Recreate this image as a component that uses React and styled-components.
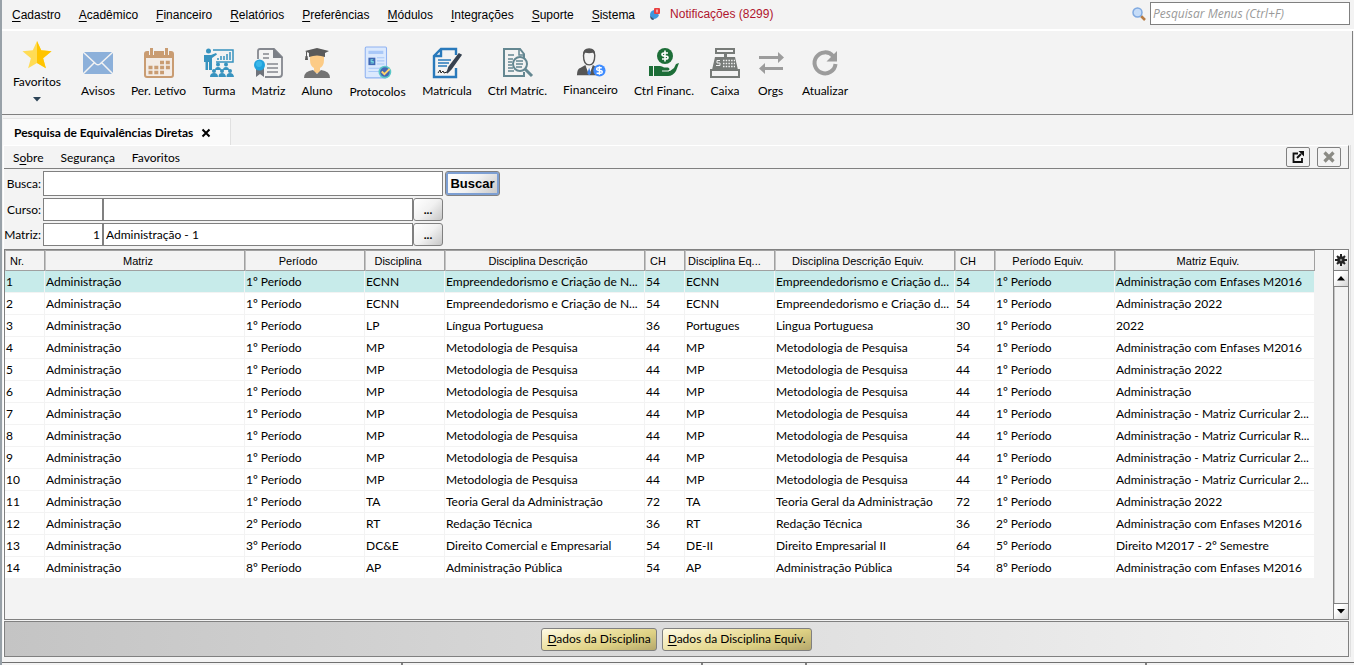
import React from "react";
import styled, { createGlobalStyle, css } from "styled-components";

const ui = `Lato, "Open Sans", sans-serif`;
const arial = `"Liberation Sans", Arial, sans-serif`;
const line = "#808080";

const Global = createGlobalStyle`
  * { box-sizing: border-box; }
  html, body, #root { height: 100%; }
  body { margin: 0; background: #f3f3f3; color: #000; font: 12px/16px ${ui}; }
  button, input { font: inherit; color: inherit; margin: 0; }
  button { padding: 0; }
`;

const Window = styled.div`
  display: flex;
  flex-direction: column;
  min-height: 100%;
  border-left: 2px solid #98a1a8;
  overflow: hidden;
`;

const MenuBar = styled.header`
  display: flex;
  align-items: center;
  height: 31px;
  padding: 0 4px 2px 10px;
  border-bottom: 2px solid #fff;
  font-family: ${arial};
`;

const MenuNav = styled.nav`
  display: flex;
  gap: ${(p) => p.$gap}px;
  flex: 1;
`;

const MenuButton = styled.button`
  padding-top: 2px;
  border: 0;
  background: none;
  white-space: nowrap;
  u { text-underline-offset: 2px; }
`;

const Notice = styled(MenuButton)`
  display: flex;
  align-items: center;
  gap: 8px;
  margin-left: -4px;
  padding-top: 0;
  color: #b0152e;
`;

const Search = styled.label`
  display: flex;
  align-items: center;
  gap: 4px;
  input {
    width: 200px;
    height: 23px;
    padding: 0 2px;
    border: 1px solid ${line};
    background: #fff;
    font-family: "Open Sans", sans-serif;
    font-style: italic;
    border-radius: 0;
  }
  input::placeholder { color: #999; opacity: 1; }
`;

const ToolBar = styled.div`
  display: flex;
  align-items: center;
  height: 84px;
  padding-left: 3px;
  margin-right: 1px;
  border-right: 1px solid ${line};
  border-bottom: 1px solid ${line};
`;

const Tool = styled.button`
  display: flex;
  flex-direction: column;
  align-items: center;
  gap: 4px;
  width: ${(p) => p.$width}px;
  margin-right: ${(p) => (p.$spaced ? 4 : 0)}px;
  border: 0;
  background: none;
  white-space: nowrap;
  svg { display: block; }
`;

const TabStrip = styled.div`
  display: flex;
  padding: 3px 0 0 1px;
  height: 30px;
`;

const Tab = styled.div`
  display: flex;
  align-items: center;
  gap: 8px;
  width: 228px;
  padding: 2px 0 0 11px;
  border-top: 1px solid #e6e6e6;
  border-right: 1px solid #e0e0e0;
  background: #fafafa;
  font-weight: 700;
  white-space: nowrap;
  button { display: flex; border: 0; background: none; }
`;

const Panel = styled.main`
  display: flex;
  flex-direction: column;
  flex: 1;
  margin: 0 3px 0 1px;
  padding-right: 1px;
  border-left: 1px solid #fff;
  border-right: 1px solid #e0e0e0;
`;

const PanelMenu = styled.div`
  display: flex;
  align-items: center;
  height: 24px;
  padding: 0 7px 0 9px;
  border-top: 1px solid #fff;
  border-right: 1px solid ${line};
  border-bottom: 1px solid ${line};
`;

const IconButton = styled.button`
  display: flex;
  align-items: center;
  justify-content: center;
  width: 24px;
  height: 20px;
  margin-left: 7px;
  border: 1px solid ${line};
  border-radius: 2px;
  background: #f3f3f3;
`;

const Form = styled.form`
  display: flex;
  flex-direction: column;
  gap: 2px;
  padding: 2px 0 3px;
`;

const Field = styled.div`
  display: flex;
  align-items: center;
  height: ${(p) => p.$height || 23}px;
  label { width: 39px; padding-right: 2px; text-align: right; white-space: nowrap; }
`;

const TextBox = styled.input`
  width: ${(p) => p.$width}px;
  height: 100%;
  padding: 0 2px;
  border: 1px solid ${line};
  border-radius: 0;
  background: #fff;
  text-align: ${(p) => p.$align || "left"};
`;

const raised = css`
  border: 1px solid ${line};
  border-radius: 3px;
  background: linear-gradient(135deg, #fff 0%, #f1f1f1 50%, #c6c6c6 100%);
`;

const PickButton = styled.button`
  ${raised}
  width: 30px;
  height: 100%;
  font-weight: 700;
`;

const SearchButton = styled.button`
  ${raised}
  width: 55px;
  height: 100%;
  margin-left: 2px;
  box-shadow: inset 0 0 0 2px #7d9fd3;
  font: 700 13px/16px ${arial};
`;

const GridFrame = styled.section`
  display: flex;
  flex: 1;
  border: 1px solid ${line};
`;

const GridBody = styled.div`
  flex: 1;
  overflow: hidden;
`;

const Table = styled.table`
  width: 1310px;
  table-layout: fixed;
  border-collapse: separate;
  border-spacing: 0;
  th, td { overflow: hidden; white-space: nowrap; }
  th {
    height: 21px;
    padding: 1px 16px 0 2px;
    border: 1px solid #a0a0a0;
    border-left-color: #c4c4c4;
    font: 400 11px/16px ${arial};
    text-align: center;
  }
  th.start { text-align: left; padding: 1px 0 0 4px; }
  th.tight { text-align: left; padding: 1px 0 0 2px; }
  td {
    height: 22px;
    padding: 0 0 0 1px;
    border-right: 1px solid #f3f3f3;
    border-bottom: 1px solid #f3f3f3;
    line-height: 16px;
  }
`;

const Row = styled.tr`
  td { background: ${(p) => (p.$selected ? "#c7ebea" : "#fff")}; }
`;

const ScrollBar = styled.div`
  display: flex;
  flex-direction: column;
  width: 15px;
  border-left: 1px solid ${line};
`;

const ScrollButton = styled.button`
  display: flex;
  align-items: center;
  justify-content: center;
  height: ${(p) => p.$height}px;
  border: 0;
  border-bottom: 1px solid ${line};
  background: linear-gradient(135deg, #fff 30%, #d4d4d4);
  &:last-child { border-top: 1px solid ${line}; border-bottom: 0; }
`;

const Track = styled.div`
  flex: 1;
  border-left: 1px solid #c4c4c4;
`;

const Actions = styled.footer`
  display: flex;
  align-items: center;
  justify-content: center;
  gap: 5px;
  height: 36px;
  margin-top: 1px;
  border: 1px solid ${line};
  background: linear-gradient(90deg, #c4c4c4, #f3f3f3);
`;

const ActionButton = styled.button`
  height: 23px;
  padding: 0 5px;
  border: 1px solid ${line};
  border-radius: 3px;
  background: linear-gradient(165deg, #fffbe6 0%, #ece0a0 40%, #ded184 65%, #b5a86c 100%);
  white-space: nowrap;
  u { text-underline-offset: 2px; }
`;

const StatusBar = styled.div`
  display: flex;
  height: 3px;
  margin-top: 5px;
  border-top: 1px solid #707070;
`;

const StatusCell = styled.div`
  flex: ${(p) => p.$share} 1 0;
  border-right: 2px solid ${line};
  &:last-child { border-right: 0; }
`;

const I = ({ size = 32, children }) => (
  <svg width={size} height={size} viewBox="0 0 32 32" aria-hidden="true">{children}</svg>
);

const icons = {
  star: (
    <I size={30}>
      <path d="M16 1l4.500 10L31.500 12l-9 7.500 3 10.500L16 24.500 6.500 30l3-10.500-9-7.500 11-1z" fill="#ffdc55" />
      <path d="M16 1l4.500 10L31.500 12l-9 7.500 3 10.500L16 24.500z" fill="#ffc400" />
    </I>
  ),
  mail: (
    <I>
      <path d="M1 5h30v22H1z" fill="#8cb0da" />
      <path d="M1 5l13 12q2 1.500 4 0L31 5M1 27l11-11M31 27L20 16" fill="none" stroke="#f3f3f3" strokeWidth="1.500" />
    </I>
  ),
  calendar: (
    <I>
      <rect x="2" y="5" width="28" height="25" rx="2" fill="#f3ece6" stroke="#c99c72" strokeWidth="2" />
      <path d="M2 5h28v6H2z" fill="#c99c72" />
      <path d="M8.500 1v7M23.500 1v7" stroke="#f3f3f3" strokeWidth="5" />
      <path d="M8.500 1v7M23.500 1v7" stroke="#c99c72" strokeWidth="3" />
      <path d="M17 15.500h10M5.500 20.500h21.500M5.500 25.500h15.500" stroke="#c99c72" strokeWidth="3.500" strokeDasharray="4 1.800" />
    </I>
  ),
  classroom: (
    <I>
      <path d="M10 3h20v12H13" fill="#f3f3f3" stroke="#3793bf" strokeWidth="1.500" />
      <path d="M15 13v-2M18 13V9M21 13v-4M24 13V7M27 13V5" stroke="#3793bf" strokeWidth="1.500" />
      <g fill="#3793bf">
        <circle cx="5.500" cy="4" r="2.500" />
        <path d="M1 8h7l5-2 1 1.500L9 11v12H6v-8H5v8H2.500v-8H1z" />
        <circle cx="15" cy="17.500" r="2" /><circle cx="23" cy="17.500" r="2" />
        <circle cx="11" cy="24" r="2" /><circle cx="19" cy="24" r="2" /><circle cx="27" cy="24" r="2" />
        <path d="M12 23q0-3 3-3t3 3zM20 23q0-3 3-3t3 3zM7 30q0-4 4-4t4 4zM15.500 30q0-4 3.500-4t4 4zM23.500 30q0-4 3.500-4t4 4z" />
      </g>
    </I>
  ),
  certificate: (
    <I>
      <path d="M5 12V4q0-2 2-2h14l8 8v17q0 3-3 3H12" fill="none" stroke="#85888f" strokeWidth="1.800" />
      <path d="M20 1l10 10H20z" fill="#7c8087" />
      <path d="M10 7h6M10 11h6M14 17h11M14 21h11M14 25h11" stroke="#85888f" strokeWidth="1.500" />
      <path d="M3 21h8v9l-4-3-4 3z" fill="#6f737b" />
      <circle cx="6.500" cy="18" r="5.500" fill="#22a3dd" />
      <circle cx="6" cy="17" r="3" fill="#3bb8ea" />
    </I>
  ),
  graduate: (
    <I>
      <path d="M9 7h14v6q0 6-4 8v5h-6v-5q-4-2-4-8z" fill="#fccb86" />
      <path d="M4 4l12-3 12 3-4 2v4q-8-3-16 0V6z" fill="#595959" />
      <path d="M5.500 4.500V12" stroke="#595959" /><path d="M4.500 9h2l.5 4H4z" fill="#595959" />
      <path d="M3 31q0-7 9-8l4 4 4-4q9 1 9 8z" fill="#737373" />
    </I>
  ),
  protocol: (
    <I size={34}>
      <rect x="4" y="1" width="20" height="29" rx="1" fill="#dbe9fd" stroke="#8fb2f1" />
      <path d="M7 6h14" stroke="#a9c8f8" strokeWidth="3" />
      <path d="M15 11h7M15 14h7M15 17h7M7 21h14M7 24h10" stroke="#a9c8f8" />
      <rect x="7" y="11" width="6.500" height="7" fill="#4068b3" />
      <path d="M11.500 13H9.500v1.500h2V16h-2.500" fill="none" stroke="#76d8df" />
      <circle cx="22.500" cy="24.500" r="6" fill="#5ac8c8" />
      <circle cx="22.500" cy="24.500" r="4.500" fill="#4467b4" />
      <path d="M19.500 24l2.500 2.500 5-5" fill="none" stroke="#ffd36a" strokeWidth="1.800" />
    </I>
  ),
  enrol: (
    <I>
      <path d="M25 8V2H10L3 9v21h22v-9M10 2v7H3" fill="none" stroke="#2979bb" strokeWidth="2.400" />
      <path d="M7 13h13M7 16h11M7 19h9" stroke="#2979bb" strokeWidth="1.500" />
      <path d="M7 26l2-3 1 3 2-2 1 2 3-1" fill="none" stroke="#222" />
      <path d="M16 26l2-6L28 7l2 1-10 14z" fill="#374250" stroke="#374250" strokeWidth="1.500" />
    </I>
  ),
  inspect: (
    <I>
      <path d="M22 12V7l-4-5H2v27h20v-4" fill="none" stroke="#648791" strokeWidth="2" />
      <path d="M17 2v6h5M6 8h6M6 12h5M6 15h4M6 18h4M6 21h5M6 24h6" fill="none" stroke="#648791" strokeWidth="1.500" />
      <circle cx="18" cy="17" r="7" fill="#f3f3f3" stroke="#648791" strokeWidth="2" />
      <path d="M14 14h7M14 17h7M14 20h6" stroke="#648791" strokeWidth="1.500" />
      <path d="M23 22l7 7" stroke="#648791" strokeWidth="3" />
    </I>
  ),
  finance: (
    <I size={30}>
      <path d="M8 8q0-7 6-7t6 7q0 10-6 10T8 8z" fill="#f3f3f3" stroke="#555" strokeWidth="1.500" />
      <path d="M8 9Q6 1 14 1t6 8q-1-4-2-4-4 1-8 0-1 0-2 4z" fill="#555" />
      <path d="M1 29q0-7 4-8l5-3 4 5 4-5 5 3q3 1 3 8z" fill="#555" />
      <path d="M10 18l4 11 4-11-4 4z" fill="#fff" /><path d="M14 21l2 6-2 2-2-2z" fill="#3b82ee" />
      <circle cx="25" cy="24" r="6.500" fill="#3f8cff" />
      <path d="M27.500 21h-4q-1.500 0-1.500 1.500T25 24t3 1.500-1.500 1.500H22M25 19.500v9" fill="none" stroke="#fff" strokeWidth="1.500" />
    </I>
  ),
  payment: (
    <I>
      <circle cx="17" cy="9" r="8" fill="#1d6e38" />
      <path d="M20 6h-4q-2 0-2 1.500T17 9t3 1.500-2 1.500h-4M17 3.500v11" fill="none" stroke="#fff" strokeWidth="1.600" />
      <path d="M1 19h4v10H1z" fill="#1d6e38" />
      <path d="M6 19h6q2 0 4 1.500h4q3 1.500 0 3.500h-6 8l4-3 2-4 3-1-3 8q-3 5-8 5H6z" fill="#1d6e38" />
      <path d="M14 24h7" stroke="#f3f3f3" />
    </I>
  ),
  register: (
    <I>
      <path d="M7 2h18v4H7z" fill="none" stroke="#777b78" strokeWidth="2" />
      <path d="M15 6h3v5h-3z" fill="#777b78" /><path d="M6 10h20l3 13H3z" fill="#777b78" />
      <path d="M14 13.500h12M14 16.500h12M14 19.500h12" stroke="#f3f3f3" strokeWidth="1.500" strokeDasharray="1.500 1.200" />
      <path d="M11 13.500H8V16h3v2.500H7" fill="none" stroke="#f3f3f3" />
      <rect x="2" y="23" width="28" height="7" fill="#f3f3f3" stroke="#777b78" strokeWidth="2" />
    </I>
  ),
  swap: (
    <I>
      <path d="M4 9h19V5l6 5.500-6 5.500v-4H4zM28 20H10v-4l-6 5.500 6 5.500v-4h18z" fill="#9c9c9c" />
    </I>
  ),
  refresh: (
    <I>
      <path d="M24 9a10.500 10.500 0 1 0 2.500 8" fill="none" stroke="#9c9c9c" strokeWidth="4" />
      <path d="M28 4v10.500H17.500z" fill="#9c9c9c" />
    </I>
  ),
};

const tools = [
  ["Favoritos", 64, "star"], ["Avisos", 50, "mail"], ["Per. Letívo", 71, "calendar"],
  ["Turma", 50, "classroom"], ["Matriz", 49, "certificate"], ["Aluno", 48, "graduate"],
  ["Protocolos", 73, "protocol"], ["Matrícula", 66, "enrol"], ["Ctrl Matríc.", 75, "inspect"],
  ["Financeiro", 71, "finance"], ["Ctrl Financ.", 76, "payment"], ["Caixa", 46, "register"],
  ["Orgs", 45, "swap"], ["Atualizar", 64, "refresh"],
];

const menus = ["Cadastro", "Acadêmico", "Financeiro", "Relatórios", "Preferências", "Módulos", "Integrações", "Suporte", "Sistema"];

const columns = [
  ["Nr.", 40, "start"], ["Matriz", 200], ["Período", 120], ["Disciplina", 80], ["Disciplina Descrição", 200],
  ["CH", 40, "start"], ["Disciplina Eq...", 90, "tight"], ["Disciplina Descrição Equiv.", 180], ["CH", 40, "start"],
  ["Período Equiv.", 120], ["Matriz Equiv.", 200],
];

const mp = (ch, target) => ["1º Período", "MP", "Metodologia de Pesquisa", "44", "MP", "Metodologia de Pesquisa", ch, "1º Período", target];

const rows = [
  ["1º Período", "ECNN", "Empreendedorismo e Criação de N...", "54", "ECNN", "Empreendedorismo e Criação d...", "54", "1º Período", "Administração com Enfases M2016"],
  ["1º Período", "ECNN", "Empreendedorismo e Criação de N...", "54", "ECNN", "Empreendedorismo e Criação d...", "54", "1º Período", "Administração 2022"],
  ["1º Período", "LP", "Língua Portuguesa", "36", "Portugues", "Lingua Portuguesa", "30", "1º Período", "2022"],
  mp("54", "Administração com Enfases M2016"),
  mp("44", "Administração 2022"),
  mp("44", "Administração"),
  mp("44", "Administração - Matriz Curricular 2..."),
  mp("44", "Administração - Matriz Curricular R..."),
  mp("44", "Administração - Matriz Curricular 2..."),
  mp("44", "Administração - Matriz Curricular 2..."),
  ["1º Período", "TA", "Teoria Geral da Administração", "72", "TA", "Teoria Geral da Administração", "72", "1º Período", "Administração 2022"],
  ["2º Período", "RT", "Redação Técnica", "36", "RT", "Redação Técnica", "36", "2º Período", "Administração com Enfases M2016"],
  ["3º Período", "DC&E", "Direito Comercial e Empresarial", "54", "DE-II", "Direito Empresarial II", "64", "5º Período", "Direito M2017 - 2º Semestre"],
  ["8º Período", "AP", "Administração Pública", "54", "AP", "Administração Pública", "54", "8º Período", "Administração com Enfases M2016"],
];

const Mnemonic = ({ children }) => (
  <><u>{children[0]}</u>{children.slice(1)}</>
);

const Arrow = ({ up }) => (
  <svg width="8" height="5" viewBox="0 0 8 5" aria-hidden="true">
    <path d={up ? "M0 4.500L4 0l4 4.500z" : "M0 0h8L4 4.500z"} />
  </svg>
);

const MoreArrow = () => (
  <svg width="8" height="11" viewBox="0 0 8 11" aria-hidden="true">
    <path d="M0 3h8L4 7.500z" fill="#2c4356" />
  </svg>
);

export default function App() {
  return (
    <Window>
      <Global />
      <MenuBar>
        <MenuNav $gap={18}>
          {menus.map((m) => <MenuButton key={m}><Mnemonic>{m}</Mnemonic></MenuButton>)}
          <Notice>
            <svg width="13" height="14" viewBox="0 0 13 14" aria-hidden="true">
              <path d="M1 8q0-4 4-5l5 5-1 2q-2 2-4 2l-1 1-2-1q-1-2-1-4z" fill="#3f96dc" />
              <path d="M1 9l1 3 2 1 1-1z" fill="#44576b" />
              <rect x="5" y="1" width="6" height="6" rx="1" fill="#e93f3f" />
              <path d="M8 2.500v3" stroke="#fff" />
            </svg>
            Notificações (8299)
          </Notice>
        </MenuNav>
        <Search>
          <svg width="14" height="14" viewBox="0 0 14 14" aria-hidden="true">
            <path d="M9 9l4 4" stroke="#b77b43" strokeWidth="2.500" />
            <circle cx="5.500" cy="5.500" r="4.500" fill="#c5dcf8" stroke="#7fa9e0" strokeWidth="1.500" />
          </svg>
          <input placeholder="Pesquisar Menus (Ctrl+F)" aria-label="Pesquisar Menus" />
        </Search>
      </MenuBar>
      <ToolBar>
        {tools.map(([label, width, icon], i) => (
          <Tool key={label} $width={width} $spaced={i === 0}>
            {icons[icon]}
            <span>{label}</span>
            {i === 0 && <MoreArrow />}
          </Tool>
        ))}
      </ToolBar>
      <TabStrip>
        <Tab>
          Pesquisa de Equivalências Diretas
          <button aria-label="Fechar aba">
            <svg width="10" height="10" viewBox="0 0 10 10"><path d="M1.500 1.500l7 7M8.500 1.500l-7 7" stroke="#000" strokeWidth="2" /></svg>
          </button>
        </Tab>
      </TabStrip>
      <Panel>
        <PanelMenu>
          <MenuNav $gap={17}>
            <MenuButton>S<u>o</u>bre</MenuButton>
            <MenuButton>Segurança</MenuButton>
            <MenuButton>Favoritos</MenuButton>
          </MenuNav>
          <IconButton aria-label="Abrir em janela">
            <svg width="12" height="12" viewBox="0 0 12 12">
              <path d="M6 2.500H1.500V11H10V7" fill="none" stroke="#111" strokeWidth="1.800" />
              <path d="M5 7l4-4" stroke="#111" strokeWidth="2" /><path d="M6.500 0H12v5.500z" fill="#111" />
            </svg>
          </IconButton>
          <IconButton aria-label="Fechar">
            <svg width="12" height="12" viewBox="0 0 12 12"><path d="M1.500 1.500l9 9M10.500 1.500l-9 9" stroke="#8b8b85" strokeWidth="3.200" /></svg>
          </IconButton>
        </PanelMenu>
        <Form onSubmit={(e) => e.preventDefault()}>
          <Field $height={25}>
            <label htmlFor="busca">Busca:</label>
            <TextBox id="busca" $width={400} />
            <SearchButton>Buscar</SearchButton>
          </Field>
          <Field>
            <label htmlFor="curso">Curso:</label>
            <TextBox id="curso" $width={60} $align="right" />
            <TextBox aria-label="Nome do curso" $width={310} />
            <PickButton type="button" aria-label="Escolher curso">...</PickButton>
          </Field>
          <Field>
            <label htmlFor="matriz">Matriz:</label>
            <TextBox id="matriz" $width={60} $align="right" defaultValue="1" />
            <TextBox aria-label="Nome da matriz" $width={310} defaultValue="Administração - 1" />
            <PickButton type="button" aria-label="Escolher matriz">...</PickButton>
          </Field>
        </Form>
        <GridFrame>
          <GridBody>
            <Table>
              <colgroup>{columns.map(([, w], i) => <col key={i} style={{ width: w }} />)}</colgroup>
              <thead>
                <tr>{columns.map(([t, , place], i) => <th key={i} className={place}>{t}</th>)}</tr>
              </thead>
              <tbody>
                {rows.map((r, i) => (
                  <Row key={i} $selected={i === 0}>
                    <td>{i + 1}</td><td>Administração</td>
                    {r.map((c, j) => <td key={j}>{c}</td>)}
                  </Row>
                ))}
              </tbody>
            </Table>
          </GridBody>
          <ScrollBar>
            <ScrollButton $height={21} aria-label="Configurar colunas">
              <svg width="12" height="12" viewBox="0 0 12 12">
                <path d="M6 0v12M0 6h12M2 2l8 8M10 2l-8 8" stroke="#222" strokeWidth="2" />
                <circle cx="6" cy="6" r="2.500" fill="#888" stroke="#222" strokeWidth="2.500" />
              </svg>
            </ScrollButton>
            <ScrollButton $height={16} aria-label="Rolar para cima"><Arrow up /></ScrollButton>
            <Track />
            <ScrollButton $height={16} aria-label="Rolar para baixo"><Arrow /></ScrollButton>
          </ScrollBar>
        </GridFrame>
        <Actions>
          <ActionButton><Mnemonic>Dados da Disciplina</Mnemonic></ActionButton>
          <ActionButton><Mnemonic>Dados da Disciplina Equiv.</Mnemonic></ActionButton>
        </Actions>
      </Panel>
      <StatusBar>
        {[401, 300, 103, 340, 208].map((share) => <StatusCell key={share} $share={share} />)}
      </StatusBar>
    </Window>
  );
}
